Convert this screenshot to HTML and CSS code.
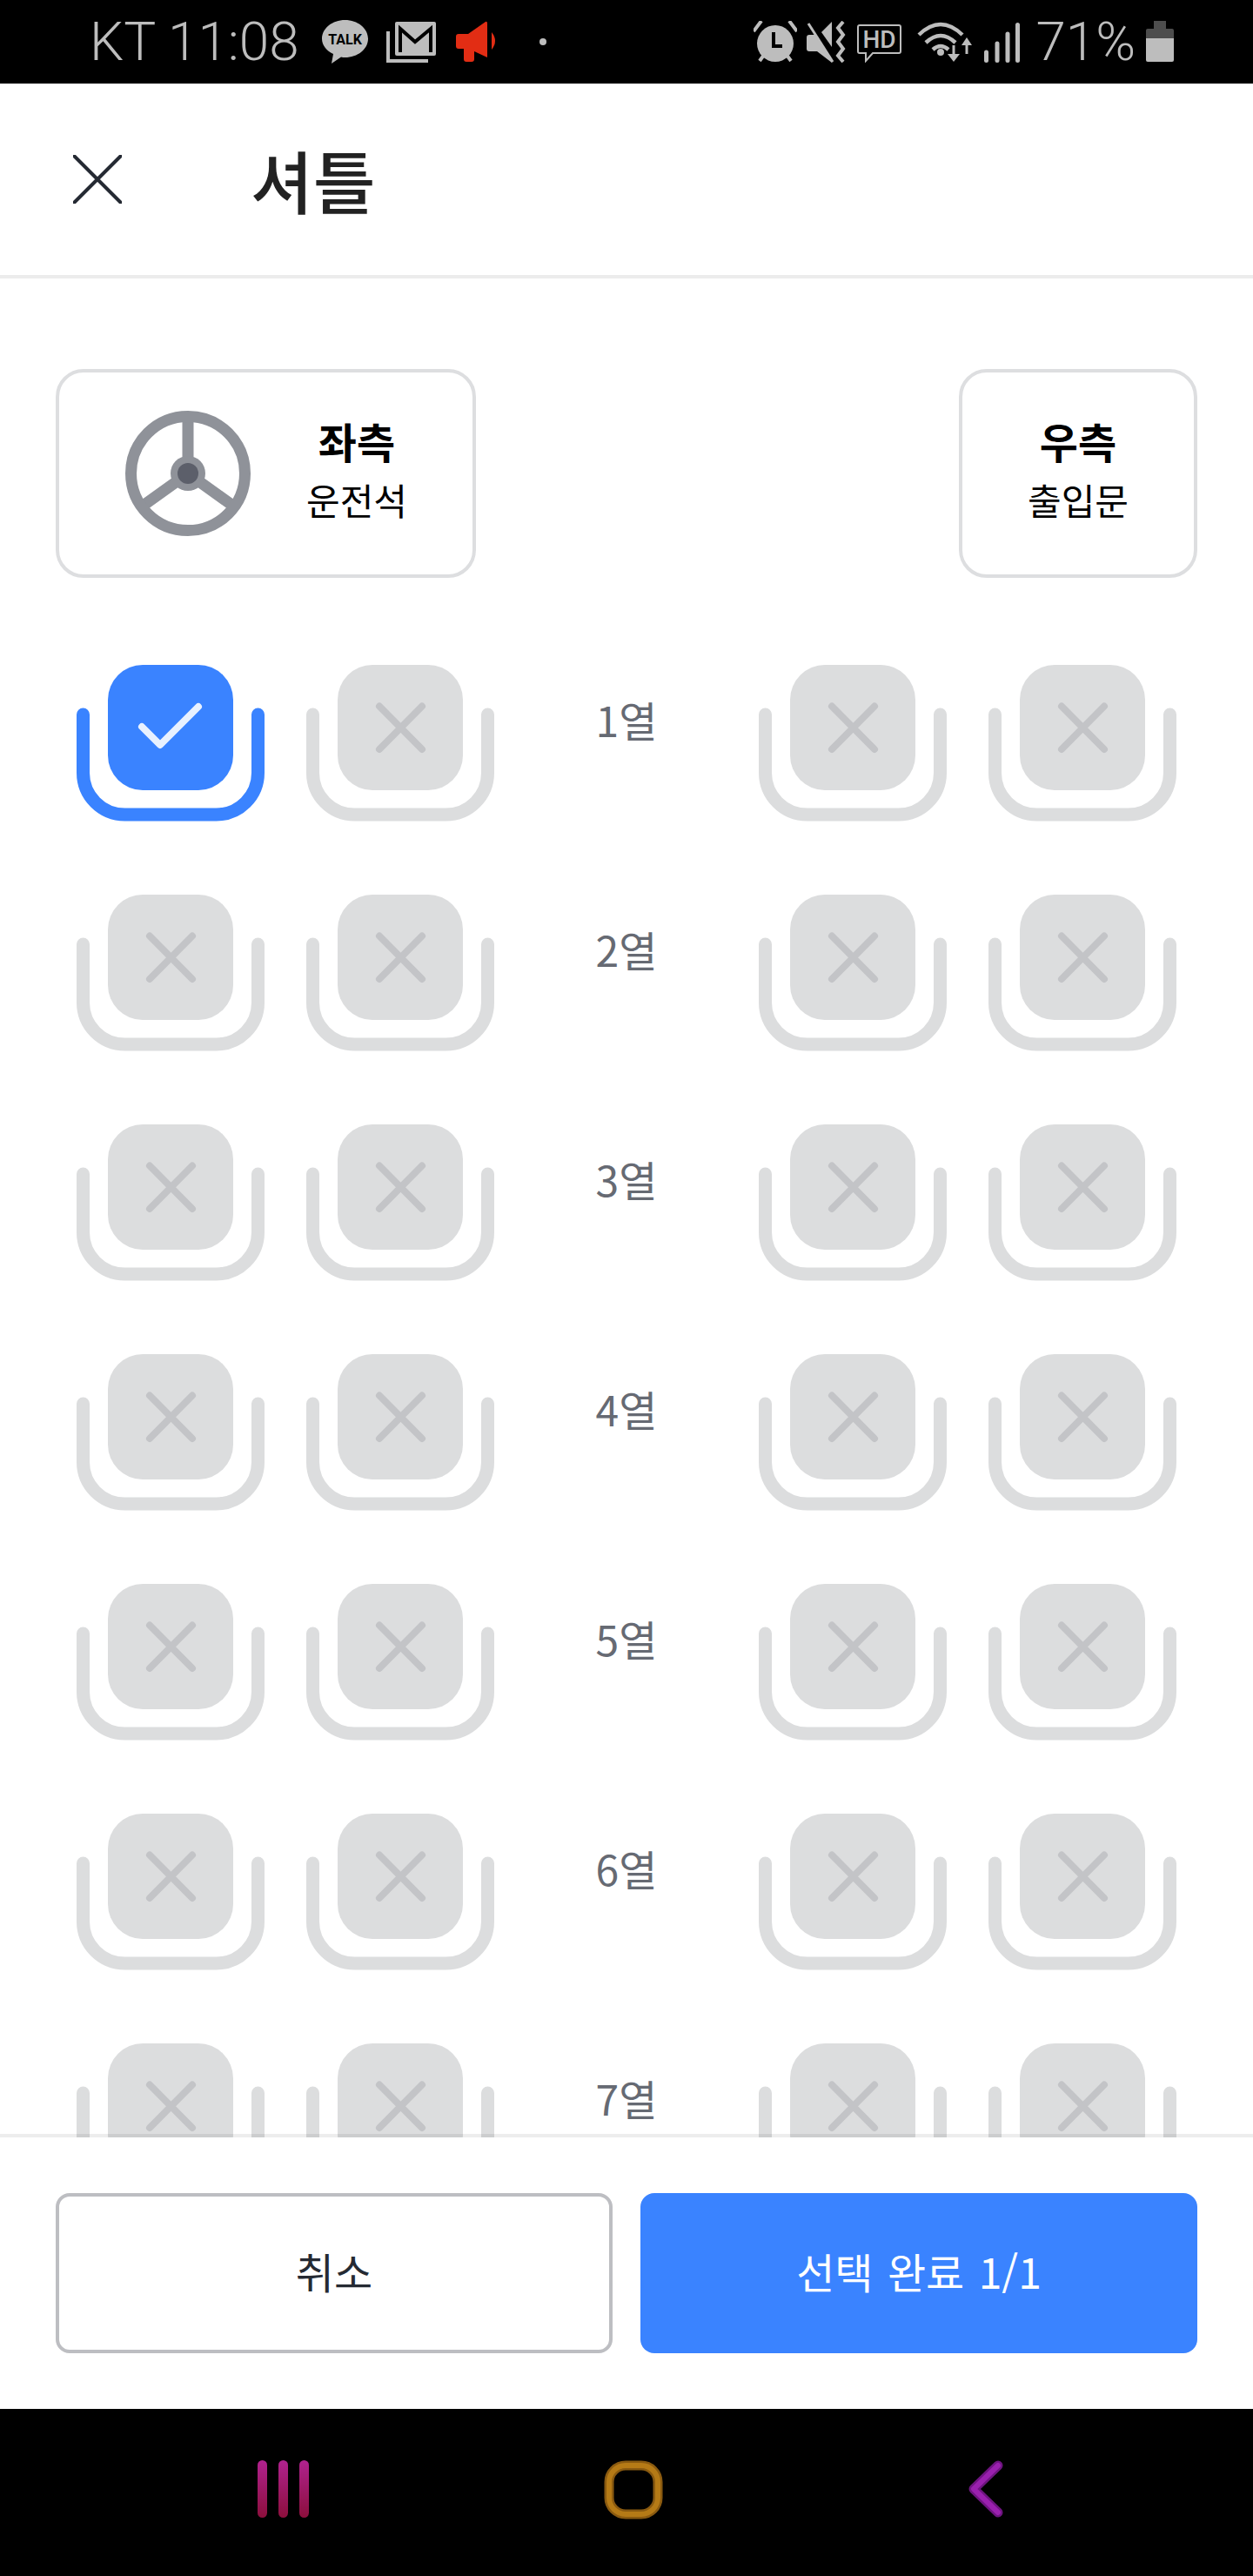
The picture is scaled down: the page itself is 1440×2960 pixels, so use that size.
FILE: index.html
```html
<!DOCTYPE html>
<html lang="ko">
<head>
    <meta charset="UTF-8">
    <meta name="viewport" content="width=device-width, initial-scale=1.0">
    <title>셔틀</title>
    <link rel="stylesheet" href="styles.css">
</head>
<body>
<svg class="defs" aria-hidden="true">
    <symbol id="seat-off" viewBox="0 0 216 180">
        <rect x="36" y="0" width="144" height="144" rx="40" fill="#dcddde"/>
        <path d="M7.500 57V124a48 48 0 0 0 48 48H160.500a48 48 0 0 0 48-48V57" fill="none" stroke="#dcddde" stroke-width="15" stroke-linecap="round"/>
        <path d="M84 47.500L133 97M133 47.500L84 97" fill="none" stroke="#c3c4c7" stroke-width="8" stroke-linecap="round"/>
    </symbol>
    <symbol id="seat-on" viewBox="0 0 216 180">
        <rect x="36" y="0" width="144" height="144" rx="40" fill="#3a83ff"/>
        <path d="M7.500 57V124a48 48 0 0 0 48 48H160.500a48 48 0 0 0 48-48V57" fill="none" stroke="#3a83ff" stroke-width="15" stroke-linecap="round"/>
        <path d="M75 71L96 92L140 48" fill="none" stroke="#e8f1ff" stroke-width="8" stroke-linecap="round" stroke-linejoin="round"/>
    </symbol>
</svg>

<div class="phone">
    <div class="status-bar">
        <div class="status-left">
            <span class="status-text">KT 11:08</span>
            <svg class="ic-talk" viewBox="0 0 53 50">
                <path d="M26.500 0C41 0 53 9.500 53 21.500S41 43 26.500 43C25 43 23.500 43 22 42.500L11 50L13 39C5 35 0 29 0 21.500C0 9.500 12 0 26.500 0Z" fill="#bdbdbd"/>
                <text x="26.500" y="28" text-anchor="middle" class="talk-label">TALK</text>
            </svg>
            <svg class="ic-mail" viewBox="0 0 57 48">
                <path d="M2 12V46H48" fill="none" stroke="#bdbdbd" stroke-width="4"/>
                <rect x="10" y="1" width="47" height="39" rx="2" fill="#bdbdbd"/>
                <path d="M16 36V9L33 24L51 9V36" fill="none" stroke="#000" stroke-width="4"/>
            </svg>
            <svg class="ic-horn" viewBox="0 0 49 48">
                <path d="M0 18Q0 15 3 15H14L34 1Q36 0 36 3V42L21 35V44Q21 47 18 47H12Q9 47 9 44V32H3Q0 32 0 29Z" fill="#e22d14"/>
                <path d="M41 13Q49 23 41 33Z" fill="#e22d14"/>
            </svg>
            <span class="status-dot"></span>
        </div>
        <div class="status-right">
            <svg class="ic-alarm" viewBox="0 0 50 48">
                <path d="M0 12L9 0M50 12L41 0M7 46L12 39M43 46L38 39" stroke="#bdbdbd" stroke-width="4" fill="none"/>
                <ellipse cx="25" cy="26" rx="21" ry="21" fill="#bdbdbd"/>
                <path d="M23 13V29H33" fill="none" stroke="#000" stroke-width="4"/>
            </svg>
            <svg class="ic-mute" viewBox="0 0 48 48">
                <path d="M0 19Q0 16 3 16H10L29 46Q30 48 29 48L12 35H3Q0 35 0 32Z" fill="#bdbdbd"/>
                <path d="M2 3L30 47" stroke="#bdbdbd" stroke-width="3"/>
                <path d="M17 13L29 1V30Z" fill="#bdbdbd"/>
                <path d="M42 1L36 8L42 16L36 24L42 32L36 40L42 47" fill="none" stroke="#bdbdbd" stroke-width="4"/>
            </svg>
            <svg class="ic-hd" viewBox="0 0 51 44">
                <path d="M3 1H48Q50 1 50 3V31Q50 33 48 33H18L10 42V33H3Q1 33 1 31V3Q1 1 3 1Z" fill="none" stroke="#bdbdbd" stroke-width="2"/>
                <text x="25.500" y="27" text-anchor="middle" class="hd-label">HD</text>
            </svg>
            <svg class="ic-wifi" viewBox="0 0 64 48">
                <path d="M2 16Q27 -8 52 16M10 25Q27 9 44 25M18 33Q27 25 36 33" fill="none" stroke="#bdbdbd" stroke-width="4.500"/>
                <circle cx="27" cy="36" r="4" fill="#bdbdbd"/>
                <path d="M42 28V42" stroke="#bdbdbd" stroke-width="3"/>
                <path d="M35 38H49L42 47Z" fill="#bdbdbd"/>
                <path d="M57 38V24" stroke="#bdbdbd" stroke-width="3"/>
                <path d="M51 28H63L57 19Z" fill="#bdbdbd"/>
            </svg>
            <svg class="ic-signal" viewBox="0 0 41 46">
                <path d="M2.500 34V43.500M15 24V43.500M27 13V43.500M38.500 2.500V43.500" fill="none" stroke="#bdbdbd" stroke-width="5" stroke-linecap="round"/>
            </svg>
            <span class="status-text status-pct">71%</span>
            <svg class="ic-battery" viewBox="0 0 32 48">
                <path d="M9 0H23V9H30Q32 9 32 11V20H0V11Q0 9 2 9H9Z" fill="#4d4d4d"/>
                <path d="M0 20H32V45Q32 47 30 47H2Q0 47 0 45Z" fill="#bdbdbd"/>
            </svg>
        </div>
    </div>

    <header class="top-bar">
        <svg class="close-icon" viewBox="0 0 56 56">
            <path d="M1.500 1.500L54.500 54.500M54.500 1.500L1.500 54.500" stroke="#252a33" stroke-width="4" stroke-linecap="round"/>
        </svg>
        <h1 class="title">셔틀</h1>
    </header>

    <main class="seat-area">
        <div class="sides">
            <div class="side-box side-left">
                <svg class="wheel" viewBox="0 0 144 144">
                    <path d="M72 8V72M72 72L19 110M72 72L125 110" stroke="#8f9299" stroke-width="13" fill="none"/>
                    <circle cx="72" cy="72" r="65.500" fill="none" stroke="#8f9299" stroke-width="13"/>
                    <circle cx="72" cy="72" r="20" fill="#8f9299"/>
                    <circle cx="72" cy="72" r="12" fill="#5c5f6a"/>
                </svg>
                <div class="side-text">
                    <strong>좌측</strong>
                    <span>운전석</span>
                </div>
            </div>
            <div class="side-box side-right">
                <div class="side-text">
                    <strong>우측</strong>
                    <span>출입문</span>
                </div>
            </div>
        </div>

        <div class="seat-grid">
            <svg class="seat"><use href="#seat-on"/></svg>
            <svg class="seat"><use href="#seat-off"/></svg>
            <div class="row-label">1열</div>
            <svg class="seat"><use href="#seat-off"/></svg>
            <svg class="seat"><use href="#seat-off"/></svg>

            <svg class="seat"><use href="#seat-off"/></svg>
            <svg class="seat"><use href="#seat-off"/></svg>
            <div class="row-label">2열</div>
            <svg class="seat"><use href="#seat-off"/></svg>
            <svg class="seat"><use href="#seat-off"/></svg>

            <svg class="seat"><use href="#seat-off"/></svg>
            <svg class="seat"><use href="#seat-off"/></svg>
            <div class="row-label">3열</div>
            <svg class="seat"><use href="#seat-off"/></svg>
            <svg class="seat"><use href="#seat-off"/></svg>

            <svg class="seat"><use href="#seat-off"/></svg>
            <svg class="seat"><use href="#seat-off"/></svg>
            <div class="row-label">4열</div>
            <svg class="seat"><use href="#seat-off"/></svg>
            <svg class="seat"><use href="#seat-off"/></svg>

            <svg class="seat"><use href="#seat-off"/></svg>
            <svg class="seat"><use href="#seat-off"/></svg>
            <div class="row-label">5열</div>
            <svg class="seat"><use href="#seat-off"/></svg>
            <svg class="seat"><use href="#seat-off"/></svg>

            <svg class="seat"><use href="#seat-off"/></svg>
            <svg class="seat"><use href="#seat-off"/></svg>
            <div class="row-label">6열</div>
            <svg class="seat"><use href="#seat-off"/></svg>
            <svg class="seat"><use href="#seat-off"/></svg>

            <svg class="seat"><use href="#seat-off"/></svg>
            <svg class="seat"><use href="#seat-off"/></svg>
            <div class="row-label">7열</div>
            <svg class="seat"><use href="#seat-off"/></svg>
            <svg class="seat"><use href="#seat-off"/></svg>
        </div>
    </main>

    <footer class="actions">
        <button class="btn btn-cancel">취소</button>
        <button class="btn btn-done">선택 완료 1/1</button>
    </footer>

    <nav class="nav-bar">
        <svg class="nav-recent" viewBox="0 0 60 66">
            <defs>
                <linearGradient id="recentGrad" x1="0" y1="0" x2="0" y2="1">
                    <stop offset="0" stop-color="#b0228f"/>
                    <stop offset="1" stop-color="#8c0f3c"/>
                </linearGradient>
            </defs>
            <rect x="0" y="0" width="11" height="66" rx="5.500" fill="url(#recentGrad)"/>
            <rect x="24" y="0" width="11" height="66" rx="5.500" fill="url(#recentGrad)"/>
            <rect x="48" y="0" width="11" height="66" rx="5.500" fill="url(#recentGrad)"/>
        </svg>
        <svg class="nav-home" viewBox="0 0 68 68">
            <rect x="6" y="6" width="56" height="56" rx="19" fill="none" stroke="#8a5a10" stroke-width="11"/>
            <rect x="6" y="6" width="56" height="56" rx="19" fill="none" stroke="#b57a16" stroke-width="6"/>
        </svg>
        <svg class="nav-back" viewBox="0 0 40 66">
            <path d="M34 6L6 33L34 60" fill="none" stroke="#6e1480" stroke-width="11" stroke-linecap="round" stroke-linejoin="round"/>
            <path d="M34 6L6 33L34 60" fill="none" stroke="#9a20ae" stroke-width="6" stroke-linecap="round" stroke-linejoin="round"/>
        </svg>
    </nav>
</div>
</body>
</html>
```

FILE: styles.css
```css
* {
    box-sizing: border-box;
}
body {
    margin: 0;
    padding: 0;
    background: #fff;
    font-family: "Noto Sans CJK KR", "Noto Sans", sans-serif;
}
.defs {
    display: none;
}
.phone {
    width: 1440px;
    height: 2960px;
    display: flex;
    flex-direction: column;
    overflow: hidden;
}

/* status bar */
.status-bar {
    height: 96px;
    flex: none;
    background: #000;
    display: flex;
    justify-content: space-between;
    padding: 0 91px 0 103px;
}
.status-left, .status-right {
    display: flex;
    align-items: flex-start;
    padding-top: 24px;
}
.status-text {
    font-family: Roboto, sans-serif;
    font-weight: 300;
    font-size: 62px;
    line-height: 48px;
    color: #bdbdbd;
    white-space: nowrap;
}
.status-left .status-text {
    width: 267px;
}
.talk-label {
    font-family: Roboto, sans-serif;
    font-weight: 700;
    font-size: 16px;
    fill: #000;
}
.hd-label {
    font-family: Roboto, sans-serif;
    font-weight: 500;
    font-size: 28px;
    fill: #bdbdbd;
}
.ic-talk { width: 53px; height: 50px; margin: -1px 21px 0 0; }
.ic-mail { width: 57px; height: 48px; margin-right: 23px; }
.ic-horn { width: 49px; height: 48px; margin-right: 47px; }
.status-dot {
    width: 8px;
    height: 8px;
    margin-top: 20px;
    border-radius: 50%;
    background: #bdbdbd;
}
.ic-alarm { width: 50px; height: 48px; margin-right: 11px; }
.ic-mute { width: 48px; height: 48px; margin-right: 10px; }
.ic-hd { width: 51px; height: 44px; margin: 4px 18px 0 0; }
.ic-wifi { width: 64px; height: 48px; margin-right: 13px; }
.ic-signal { width: 41px; height: 46px; margin: 2px 18px 0 0; }
.status-pct { margin-right: 12px; }
.ic-battery { width: 32px; height: 48px; }

/* top bar */
.top-bar {
    height: 224px;
    flex: none;
    display: flex;
    align-items: center;
    padding-left: 84px;
    border-bottom: 4px solid #ececec;
}
.close-icon {
    width: 56px;
    height: 56px;
    margin-right: 148px;
}
.title {
    margin: 0;
    font-size: 78px;
    font-weight: 500;
    color: #222;
}

/* seat area */
.seat-area {
    flex: 1;
    min-height: 0;
    overflow: hidden;
    padding-top: 104px;
}
.sides {
    display: flex;
    justify-content: space-between;
    padding: 0 64px;
}
.side-box {
    height: 240px;
    border: 4px solid #dddee0;
    border-radius: 32px;
    display: flex;
    align-items: center;
}
.side-left {
    width: 483px;
    padding-left: 76px;
}
.side-right {
    width: 274px;
    justify-content: center;
}
.wheel {
    width: 144px;
    height: 144px;
    margin-right: 60px;
}
.side-text {
    width: 124px;
    margin-bottom: 8px;
    text-align: center;
    color: #000;
}
.side-text strong, .side-text span {
    display: block;
    line-height: 68px;
}
.side-text strong {
    font-size: 48px;
    font-weight: 700;
}
.side-text span {
    font-size: 42px;
}
.seat-grid {
    display: grid;
    grid-template-columns: 216px 216px 1fr 216px 216px;
    column-gap: 48px;
    row-gap: 84px;
    padding: 100px 88px 0;
}
.seat {
    width: 216px;
    height: 180px;
    display: block;
}
.row-label {
    font-size: 48px;
    line-height: 124px;
    text-align: center;
    color: #666a73;
}

/* footer */
.actions {
    height: 316px;
    flex: none;
    margin-top: -4px;
    position: relative;
    background: #fff;
    background-clip: padding-box;
    border-top: 4px solid rgba(0, 0, 0, 0.07);
    display: grid;
    grid-template-columns: 1fr 1fr;
    grid-template-rows: 184px;
    gap: 32px;
    padding: 64px 64px 0;
}
.btn {
    border-radius: 16px;
    font-family: inherit;
    font-size: 48px;
    padding: 0 0 6px;
}
.btn-cancel {
    background: #fff;
    border: 4px solid #bdbec2;
    color: #252a33;
}
.btn-done {
    background: #3a83ff;
    border: none;
    color: #fff;
    word-spacing: 3px;
}

/* nav bar */
.nav-bar {
    height: 192px;
    flex: none;
    background: #000;
    display: flex;
    align-items: flex-start;
    padding: 59px 0 0 296px;
}
.nav-recent { width: 60px; height: 66px; margin-right: 338px; }
.nav-home { width: 68px; height: 68px; margin-right: 351px; }
.nav-back { width: 40px; height: 66px; }
```
